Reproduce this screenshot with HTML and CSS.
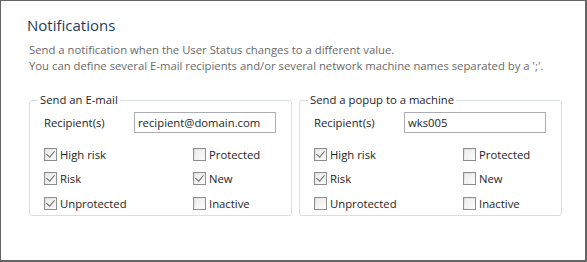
FILE: index.html
```html
<!DOCTYPE html>
<html lang="en">
<head>
    <meta charset="UTF-8">
    <title>Notifications</title>
    <link rel="stylesheet" href="styles.css">
</head>
<body>
    <div class="window">
        <h1 class="title">Notifications</h1>
        <p class="intro">
            Send a notification when the User Status changes to a different value.<br>
            You can define several E-mail recipients and/or several network machine names separated by a ';'.
        </p>

        <div class="groups">
            <fieldset class="group">
                <legend>Send an E-mail</legend>
                <div class="recipient-row">
                    <label class="recipient-label">Recipient(s)</label>
                    <input type="text" class="recipient-input" value="recipient@domain.com">
                </div>
                <div class="checks">
                    <label class="check"><span class="box checked"></span>High risk</label>
                    <label class="check"><span class="box"></span>Protected</label>
                    <label class="check"><span class="box checked"></span>Risk</label>
                    <label class="check"><span class="box checked"></span>New</label>
                    <label class="check"><span class="box checked"></span>Unprotected</label>
                    <label class="check"><span class="box"></span>Inactive</label>
                </div>
            </fieldset>

            <fieldset class="group">
                <legend>Send a popup to a machine</legend>
                <div class="recipient-row">
                    <label class="recipient-label">Recipient(s)</label>
                    <input type="text" class="recipient-input" value="wks005">
                </div>
                <div class="checks">
                    <label class="check"><span class="box checked"></span>High risk</label>
                    <label class="check"><span class="box"></span>Protected</label>
                    <label class="check"><span class="box checked"></span>Risk</label>
                    <label class="check"><span class="box"></span>New</label>
                    <label class="check"><span class="box"></span>Unprotected</label>
                    <label class="check"><span class="box"></span>Inactive</label>
                </div>
            </fieldset>
        </div>
    </div>
</body>
</html>
```

FILE: styles.css
```css
* {
    box-sizing: border-box;
    margin: 0;
    padding: 0;
}

body {
    font-family: 'Open Sans', 'Noto Sans', sans-serif;
    font-size: 11.3px;
    color: #1e1e1e;
    background-color: #ffffff;
}

.window {
    width: 587px;
    height: 262px;
    border: 1px solid #646464;
    border-right-width: 2px;
    border-bottom-width: 2px;
    padding: 13px 0 0 26px;
}

.title {
    font-size: 15px;
    font-weight: normal;
    color: #1e3b5d;
    line-height: 22px;
}

.intro {
    margin: 6px 0 0 2px;
    color: #6a6a6a;
    line-height: 16px;
}

.groups {
    display: flex;
    gap: 7px;
    margin: 18px 0 0 2px;
}

.group {
    width: 263px;
    height: 124px;
    border: 1px solid #d5dfe5;
    border-radius: 3px;
    padding: 4px 0 0 14px;
}

.group legend {
    margin-left: -6px;
    padding: 0 2px;
    color: #1e1e1e;
    line-height: 16px;
}

.recipient-row {
    display: flex;
    align-items: center;
    height: 21px;
}

.recipient-label {
    width: 90px;
}

.recipient-input {
    width: 142px;
    height: 21px;
    border: 1px solid #abadb3;
    padding: 0 3px;
    font-family: inherit;
    font-size: inherit;
    color: #1e1e1e;
    outline: none;
}

.checks {
    display: grid;
    grid-template-columns: 149px 1fr;
    grid-auto-rows: 24.5px;
    margin-top: 9px;
}

.check {
    display: flex;
    align-items: center;
    gap: 3px;
}

.box {
    width: 13px;
    height: 13px;
    border: 1px solid #8f8f8f;
    background: linear-gradient(135deg, #dcdcdc, #ffffff);
    position: relative;
}

.box::after {
    content: '';
    position: absolute;
    inset: 1px;
    background: linear-gradient(135deg, #ececec, #fbfbfb);
}

.box.checked::before {
    content: '';
    position: absolute;
    left: 3px;
    top: 0px;
    width: 4px;
    height: 7px;
    border: solid #6a6a6a;
    border-width: 0 1.5px 1.5px 0;
    transform: rotate(40deg);
    z-index: 1;
}
```
